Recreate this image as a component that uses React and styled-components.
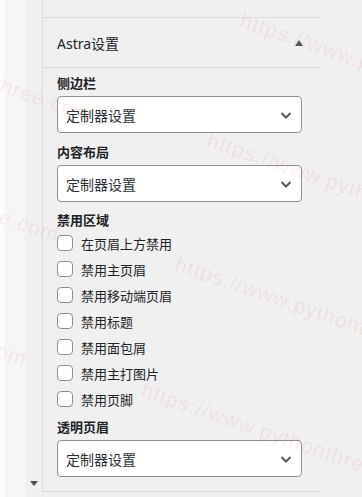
import React from 'react';
import styled, { createGlobalStyle } from 'styled-components';

const GlobalStyle = createGlobalStyle`
  html, body {
    margin: 0;
    padding: 0;
    background: #f0f0f0;
  }
  body {
    font-family: "Noto Sans", "Noto Sans CJK SC", sans-serif;
    color: #1d2327;
  }
`;

const Screen = styled.div`
  position: relative;
  display: flex;
  width: 362px;
  height: 497px;
  overflow: hidden;
  background: #f0f0f0;
`;

const Gutter = styled.div`
  width: 25px;
  flex-shrink: 0;
  background: #f6f6f6;
  box-shadow: inset 5px 0 0 #fcfcfc;
`;

const Scrollbar = styled.div`
  width: 17px;
  flex-shrink: 0;
  display: flex;
  flex-direction: column;
  justify-content: flex-end;
  align-items: center;
  padding-bottom: 11px;
  box-sizing: border-box;
  background: #f0f0f0;
`;

const ArrowDown = styled.span`
  width: 0;
  height: 0;
  border-left: 4px solid transparent;
  border-right: 4px solid transparent;
  border-top: 5px solid #505050;
`;

const Panel = styled.div`
  width: 280px;
  height: 492px;
  flex-shrink: 0;
  display: flex;
  flex-direction: column;
  border-left: 1px solid #dcdcde;
  border-bottom: 1px solid #dcdcde;
  box-sizing: border-box;
`;

const TopSpacer = styled.div`
  height: 17px;
  border-bottom: 1px solid #dcdcde;
`;

const Header = styled.div`
  height: 49px;
  display: flex;
  align-items: center;
  justify-content: space-between;
  padding: 0 19px 0 14px;
  border-bottom: 1px solid #dcdcde;
  font-size: 14px;
  color: #1d2327;
`;

const ArrowUp = styled.span`
  width: 0;
  height: 0;
  border-left: 4px solid transparent;
  border-right: 4px solid transparent;
  border-bottom: 6px solid #50575e;
`;

const Body = styled.div`
  display: flex;
  flex-direction: column;
  padding: 0 20px 0 14px;
`;

const Label = styled.div`
  margin-top: ${(p) => p.$top}px;
  margin-bottom: ${(p) => p.$bottom ?? 3}px;
  font-size: 13px;
  line-height: 20px;
  font-weight: 600;
  color: #1d2327;
`;

const Select = styled.div`
  height: 37px;
  display: flex;
  align-items: center;
  justify-content: space-between;
  padding: 0 8px 0 8px;
  box-sizing: border-box;
  background: #fff;
  border: 1px solid #8c8f94;
  border-radius: 4px;
  font-size: 14px;
  color: #2c3338;
`;

const CheckList = styled.div`
  display: flex;
  flex-direction: column;
`;

const CheckRow = styled.label`
  height: 26px;
  display: flex;
  align-items: center;
  gap: 8px;
  font-size: 13px;
  color: #1d2327;
`;

const Box = styled.span`
  width: 16px;
  height: 16px;
  box-sizing: border-box;
  border: 1px solid #8c8f94;
  border-radius: 4px;
  background: #fff;
  flex-shrink: 0;
`;

const Rest = styled.div`
  flex: 1;
  background: #f0f0f0;
`;

const Watermark = styled.div`
  position: absolute;
  inset: 0;
  pointer-events: none;
`;

const Mark = styled.span`
  position: absolute;
  white-space: nowrap;
  font-family: "Liberation Sans", sans-serif;
  font-size: 21px;
  letter-spacing: 1px;
  color: rgba(225, 40, 40, 0.09);
  transform-origin: 0 0;
  transform: rotate(19deg);
`;

const Chevron = () => (
  <svg width="14" height="14" viewBox="0 0 14 14" fill="none">
    <path d="M2.5 5 L7 9.5 L11.5 5" stroke="#50575e" strokeWidth="2" />
  </svg>
);

const checks = [
  '在页眉上方禁用',
  '禁用主页眉',
  '禁用移动端页眉',
  '禁用标题',
  '禁用面包屑',
  '禁用主打图片',
  '禁用页脚',
];

const marks = [
  [245, 8],
  [212, 128],
  [180, 252],
  [146, 378],
];

const App = () => (
  <>
    <GlobalStyle />
    <Screen>
      <Gutter />
      <Scrollbar>
        <ArrowDown />
      </Scrollbar>
      <Panel>
        <TopSpacer />
        <Header>
          <span>Astra设置</span>
          <ArrowUp />
        </Header>
        <Body>
          <Label $top={5}>侧边栏</Label>
          <Select>
            定制器设置
            <Chevron />
          </Select>
          <Label $top={9}>内容布局</Label>
          <Select>
            定制器设置
            <Chevron />
          </Select>
          <Label $top={8} $bottom={0}>禁用区域</Label>
          <CheckList>
            {checks.map((c) => (
              <CheckRow key={c}>
                <Box />
                {c}
              </CheckRow>
            ))}
          </CheckList>
          <Label $top={5}>透明页眉</Label>
          <Select>
            定制器设置
            <Chevron />
          </Select>
        </Body>
      </Panel>
      <Rest />
      <Watermark>
        {marks.map(([x, y]) => (
          <React.Fragment key={y}>
            <Mark style={{ left: x, top: y }}>https://www.pythonthree.com</Mark>
            <Mark style={{ left: x - 430, top: y }}>https://www.pythonthree.com</Mark>
          </React.Fragment>
        ))}
      </Watermark>
    </Screen>
  </>
);

export default App;
